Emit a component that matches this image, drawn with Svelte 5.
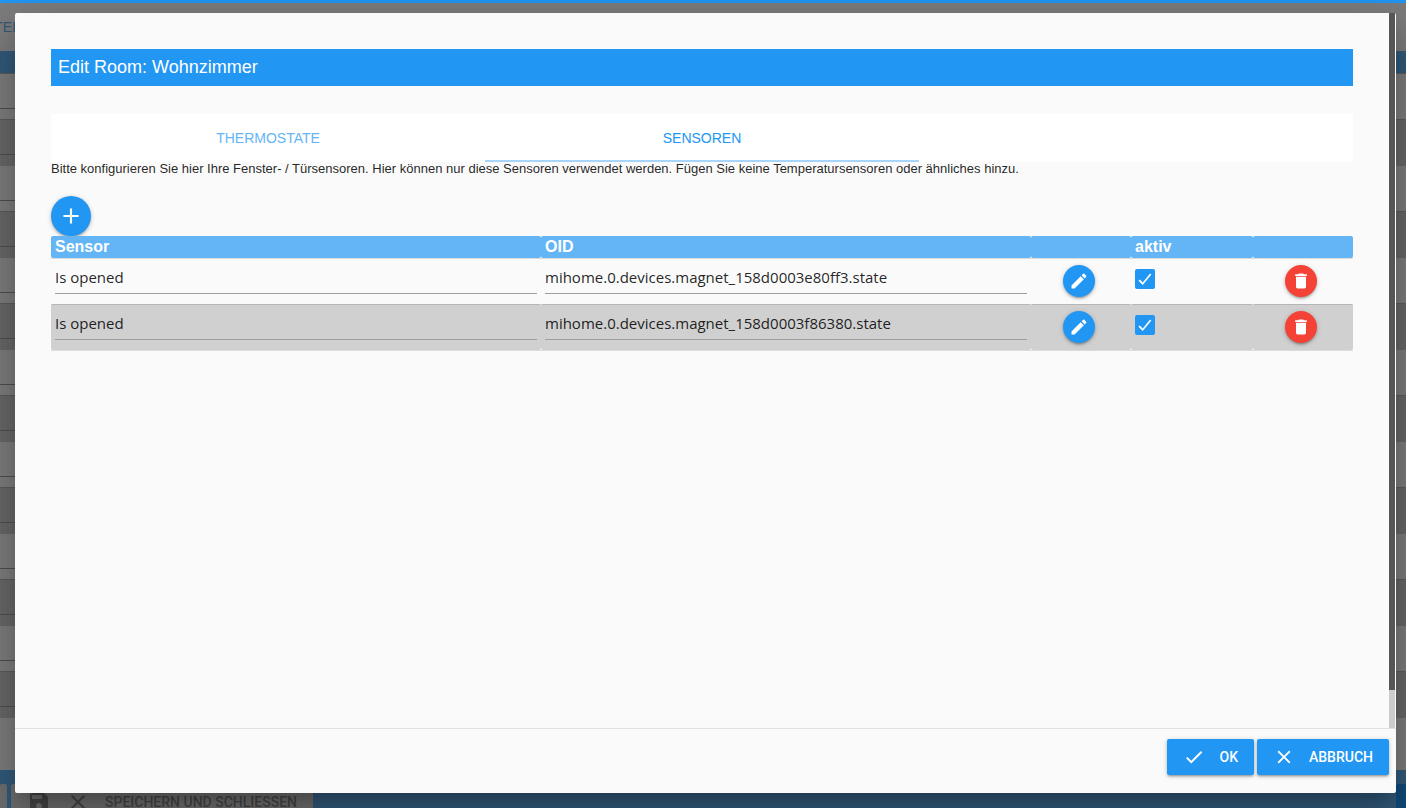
<script lang="ts">
  interface Sensor {
    name: string;
    oid: string;
    active: boolean;
  }

  const icons = {
    add: 'M19 13h-6v6h-2v-6H5v-2h6V5h2v6h6v2z',
    edit: 'M3 17.25V21h3.75L17.81 9.94l-3.75-3.75L3 17.25zM20.71 7.04c.39-.39.39-1.02 0-1.41l-2.34-2.34c-.39-.39-1.02-.39-1.41 0l-1.83 1.83 3.75 3.75 1.83-1.83z',
    remove: 'M6 19c0 1.1.9 2 2 2h8c1.1 0 2-.9 2-2V7H6v12zM19 4h-3.5l-1-1h-5l-1 1H5v2h14V4z',
    check: 'M9 16.17L4.83 12l-1.42 1.41L9 19 21 7l-1.41-1.41z',
    tick: 'M8.6 17.2L4.2 12.8l-2 2L8.6 21 21.6 5.2l-2-1.6z',
    close: 'M19 6.41L17.59 5 12 10.59 6.41 5 5 6.41 10.59 12 5 17.59 6.41 19 12 13.41 17.59 19 19 17.59 13.41 12z',
    save: 'M17 3H5c-1.11 0-2 .9-2 2v14c0 1.1.89 2 2 2h14c1.1 0 2-.9 2-2V7l-4-4zm-5 16c-1.66 0-3-1.34-3-3s1.34-3 3-3 3 1.34 3 3-1.34 3-3 3zm3-10H5V5h10v4z'
  };

  const tabs = ['Thermostate', 'Sensoren'];
  const backRows = Array.from({ length: 15 });

  let activeTab = $state('Sensoren');
  let sensors = $state<Sensor[]>([
    { name: 'Is opened', oid: 'mihome.0.devices.magnet_158d0003e80ff3.state', active: true },
    { name: 'Is opened', oid: 'mihome.0.devices.magnet_158d0003f86380.state', active: true }
  ]);

  function addSensor() {
    sensors.push({ name: '', oid: '', active: true });
  }

  function removeSensor(index: number) {
    sensors.splice(index, 1);
  }
</script>

{#snippet icon(path: string, size: number)}
  <svg width={size} height={size} viewBox="0 0 24 24" fill="currentColor" aria-hidden="true">
    <path d={path} />
  </svg>
{/snippet}

<div class="app">
  <div class="progress"></div>

  <!-- settings page behind the dialog -->
  <div class="page" inert>
    <div class="page-tabs"><span>TEL</span></div>
    <div class="page-head"></div>
    {#each backRows as _}
      <div class="page-row"><div class="page-field"></div></div>
    {/each}
    <div class="page-footer">
      <button type="button" class="page-btn page-btn-first" aria-label="Speichern"></button>
      <button type="button" class="page-btn">
        {@render icon(icons.save, 24)}
        {@render icon(icons.close, 24)}
        <span>Speichern und schliessen</span>
      </button>
      <button type="button" class="page-btn page-btn-close" aria-label="Schliessen"></button>
    </div>
  </div>

  <div class="overlay">
    <div class="modal" role="dialog" aria-modal="true" aria-labelledby="modal-title">
      <div class="modal-body">
        <div class="modal-content">
          <h1 id="modal-title" class="title">Edit Room: Wohnzimmer</h1>

          <div class="tabs" role="tablist">
            {#each tabs as tab}
              <button
                type="button"
                role="tab"
                class="tab"
                class:active={tab === activeTab}
                aria-selected={tab === activeTab}
                onclick={() => (activeTab = tab)}
              >
                {tab}
              </button>
            {/each}
          </div>

          <p class="hint">
            Bitte konfigurieren Sie hier Ihre Fenster- / Türsensoren. Hier können nur diese Sensoren verwendet werden. Fügen Sie keine Temperatursensoren oder ähnliches hinzu.
          </p>

          <button type="button" class="round round-large" aria-label="Hinzufügen" onclick={addSensor}>
            {@render icon(icons.add, 26)}
          </button>

          <table class="sensors">
            <colgroup>
              <col />
              <col />
              <col class="col-button" />
              <col class="col-active" />
              <col class="col-button" />
            </colgroup>
            <thead>
              <tr>
                <th>Sensor</th>
                <th>OID</th>
                <th></th>
                <th>aktiv</th>
                <th></th>
              </tr>
            </thead>
            <tbody>
              {#each sensors as sensor, i}
                <tr>
                  <td><input type="text" class="field" aria-label="Sensor" bind:value={sensor.name} /></td>
                  <td><input type="text" class="field" aria-label="OID" bind:value={sensor.oid} /></td>
                  <td class="cell-button">
                    <button type="button" class="round" aria-label="Bearbeiten">
                      {@render icon(icons.edit, 20)}
                    </button>
                  </td>
                  <td>
                    <label class="check">
                      <input type="checkbox" aria-label="aktiv" bind:checked={sensor.active} />
                      {@render icon(icons.tick, 16)}
                    </label>
                  </td>
                  <td class="cell-button">
                    <button
                      type="button"
                      class="round round-red"
                      aria-label="Löschen"
                      onclick={() => removeSensor(i)}
                    >
                      {@render icon(icons.remove, 20)}
                    </button>
                  </td>
                </tr>
              {/each}
            </tbody>
          </table>
        </div>
        <div class="rail"><div class="thumb"></div></div>
      </div>

      <div class="modal-footer">
        <button type="button" class="btn">{@render icon(icons.check, 22)}<span>OK</span></button>
        <button type="button" class="btn">{@render icon(icons.close, 22)}<span>Abbruch</span></button>
      </div>
    </div>
  </div>
</div>

<style>
  :global(body) {
    margin: 0;
    background: #fafafa;
  }

  .app {
    --blue: #2196f3;
    --blue-light: #64b5f6;
    --surface: #fafafa;
    position: relative;
    height: 100vh;
    display: flex;
    flex-direction: column;
    overflow: hidden;
    color: rgba(0, 0, 0, 0.87);
    font-family: Arial, "Liberation Sans", sans-serif;
  }

  .app *,
  .app *::before {
    box-sizing: border-box;
  }

  button {
    border: 0;
    padding: 0;
    font-family: inherit;
    cursor: pointer;
  }

  svg {
    display: block;
    flex-shrink: 0;
  }

  .progress {
    flex: none;
    height: 3px;
    background: var(--blue);
  }

  /* page in the background */
  .page {
    flex: 1;
    display: flex;
    flex-direction: column;
    min-height: 0;
    background: var(--surface);
  }

  .page-tabs {
    flex: none;
    display: flex;
    align-items: center;
    justify-content: flex-end;
    width: 20px;
    height: 48px;
    overflow: hidden;
    color: var(--blue-light);
    font-size: 14px;
  }

  .page-head {
    flex: none;
    height: 23px;
    background: var(--blue-light);
    border-bottom: 1px solid #bdbdbd;
  }

  .page-row {
    flex: none;
    height: 46px;
    background: #d0d0d0;
  }

  .page-row:nth-child(odd) {
    background: var(--surface);
    border-bottom: 1px solid #b8b8b8;
  }

  .page-row:nth-last-child(2) {
    flex: 1;
    border-bottom: 0;
  }

  .page-field {
    width: 50%;
    height: 35px;
    border-bottom: 1px solid #9e9e9e;
  }

  .page-row:nth-last-child(2) .page-field {
    border-bottom: 0;
  }

  .page-footer {
    flex: none;
    display: flex;
    gap: 4px;
    height: 38px;
    padding-top: 14px;
    background: var(--blue-light);
  }

  .page-btn {
    flex: none;
    display: flex;
    align-items: center;
    gap: 15px;
    height: 36px;
    padding: 0 16px;
    border-radius: 2px;
    background: #dfdfdf;
    color: #8c8c8c;
    font-family: Roboto, sans-serif;
    font-size: 14px;
    font-weight: 500;
    text-transform: uppercase;
  }

  .page-btn-first {
    width: 7px;
    padding: 0;
  }

  .page-btn-close {
    width: 10px;
    margin-left: auto;
    padding: 0;
    background: var(--blue);
  }

  /* dialog */
  .overlay {
    position: absolute;
    inset: 3px 0 0;
    display: flex;
    padding: 10px 10px 15px 15px;
    background: rgba(0, 0, 0, 0.5);
  }

  .modal {
    flex: 1;
    display: flex;
    flex-direction: column;
    min-width: 0;
    background: var(--surface);
    border-radius: 2px;
    box-shadow:
      0 24px 38px 3px rgba(0, 0, 0, 0.14),
      0 9px 46px 8px rgba(0, 0, 0, 0.12),
      0 11px 15px -7px rgba(0, 0, 0, 0.2);
  }

  .modal-body {
    flex: 1;
    display: flex;
    min-height: 0;
    padding-right: 1px;
  }

  .modal-content {
    flex: 1;
    min-width: 0;
    padding: 36px;
    overflow: hidden;
  }

  .rail {
    display: grid;
    grid-template-rows: 18fr 1fr;
    width: 6px;
    background: #cccccc;
  }

  .thumb {
    background: #565656;
  }

  .title {
    margin: 0 0 28px;
    padding: 0 7px;
    background: var(--blue);
    color: #fff;
    font-size: 18px;
    font-weight: 400;
    line-height: 37px;
  }

  .tabs {
    display: grid;
    grid-template-columns: repeat(3, 1fr);
    height: 48px;
    background: #fff;
  }

  .tab {
    padding-top: 2px;
    background: transparent;
    border-bottom: 2px solid transparent;
    color: #64b5f6;
    font-size: 14px;
    text-transform: uppercase;
  }

  .tab.active {
    border-bottom-color: #a6d4fa;
    color: var(--blue);
  }

  .hint {
    margin: 0 0 20px;
    font-size: 13px;
    line-height: 14px;
  }

  .round {
    display: flex;
    align-items: center;
    justify-content: center;
    width: 32px;
    height: 32px;
    border-radius: 50%;
    background: var(--blue);
    color: #fff;
    box-shadow:
      0 2px 2px 0 rgba(0, 0, 0, 0.14),
      0 3px 1px -2px rgba(0, 0, 0, 0.12),
      0 1px 5px 0 rgba(0, 0, 0, 0.2);
  }

  .round-large {
    width: 40px;
    height: 40px;
  }

  .round-red {
    background: #f44336;
  }

  .sensors {
    width: 100%;
    table-layout: fixed;
    border-collapse: collapse;
  }

  .col-button {
    width: 100px;
  }

  .col-active {
    width: 122px;
  }

  tr {
    border-bottom: 1px solid rgba(0, 0, 0, 0.12);
  }

  th {
    height: 22px;
    padding: 0 4px;
    border-radius: 2px;
    background: var(--blue-light);
    color: #fff;
    font-size: 16px;
    line-height: 20px;
    text-align: left;
  }

  td {
    height: 46px;
    padding: 0 4px;
    border-radius: 2px;
  }

  tbody tr:nth-child(even) td {
    background: #d0d0d0;
  }

  .cell-button {
    padding-left: 32px;
  }

  .field {
    display: block;
    width: 100%;
    height: 33px;
    margin-bottom: 7px;
    padding: 0;
    border: 0;
    border-bottom: 1px solid #9e9e9e;
    background: transparent;
    color: inherit;
    font-family: "Segoe UI", "Open Sans", sans-serif;
    font-size: 15px;
    outline: 0;
  }

  .check {
    display: grid;
    place-items: center;
    width: 20px;
    height: 20px;
    margin-bottom: 4px;
    color: #fff;
  }

  .check input,
  .check :global(svg) {
    grid-area: 1 / 1;
  }

  .check :global(svg) {
    pointer-events: none;
  }

  .check input {
    width: 20px;
    height: 20px;
    margin: 0;
    appearance: none;
    border: 2px solid #5a5a5a;
    border-radius: 2px;
  }

  .check input:checked {
    border-color: var(--blue);
    background: var(--blue);
  }

  .modal-footer {
    flex: none;
    display: flex;
    justify-content: flex-end;
    gap: 3px;
    height: 65px;
    padding: 10px 7px;
    border-top: 1px solid #e0e0e0;
  }

  .btn {
    display: flex;
    align-items: center;
    gap: 14px;
    height: 36px;
    padding: 0 16px;
    border-radius: 2px;
    background: var(--blue);
    color: #fff;
    font-family: Roboto, sans-serif;
    font-size: 14px;
    font-weight: 500;
    text-transform: uppercase;
    box-shadow:
      0 2px 2px 0 rgba(0, 0, 0, 0.14),
      0 3px 1px -2px rgba(0, 0, 0, 0.12),
      0 1px 5px 0 rgba(0, 0, 0, 0.2);
  }
</style>
